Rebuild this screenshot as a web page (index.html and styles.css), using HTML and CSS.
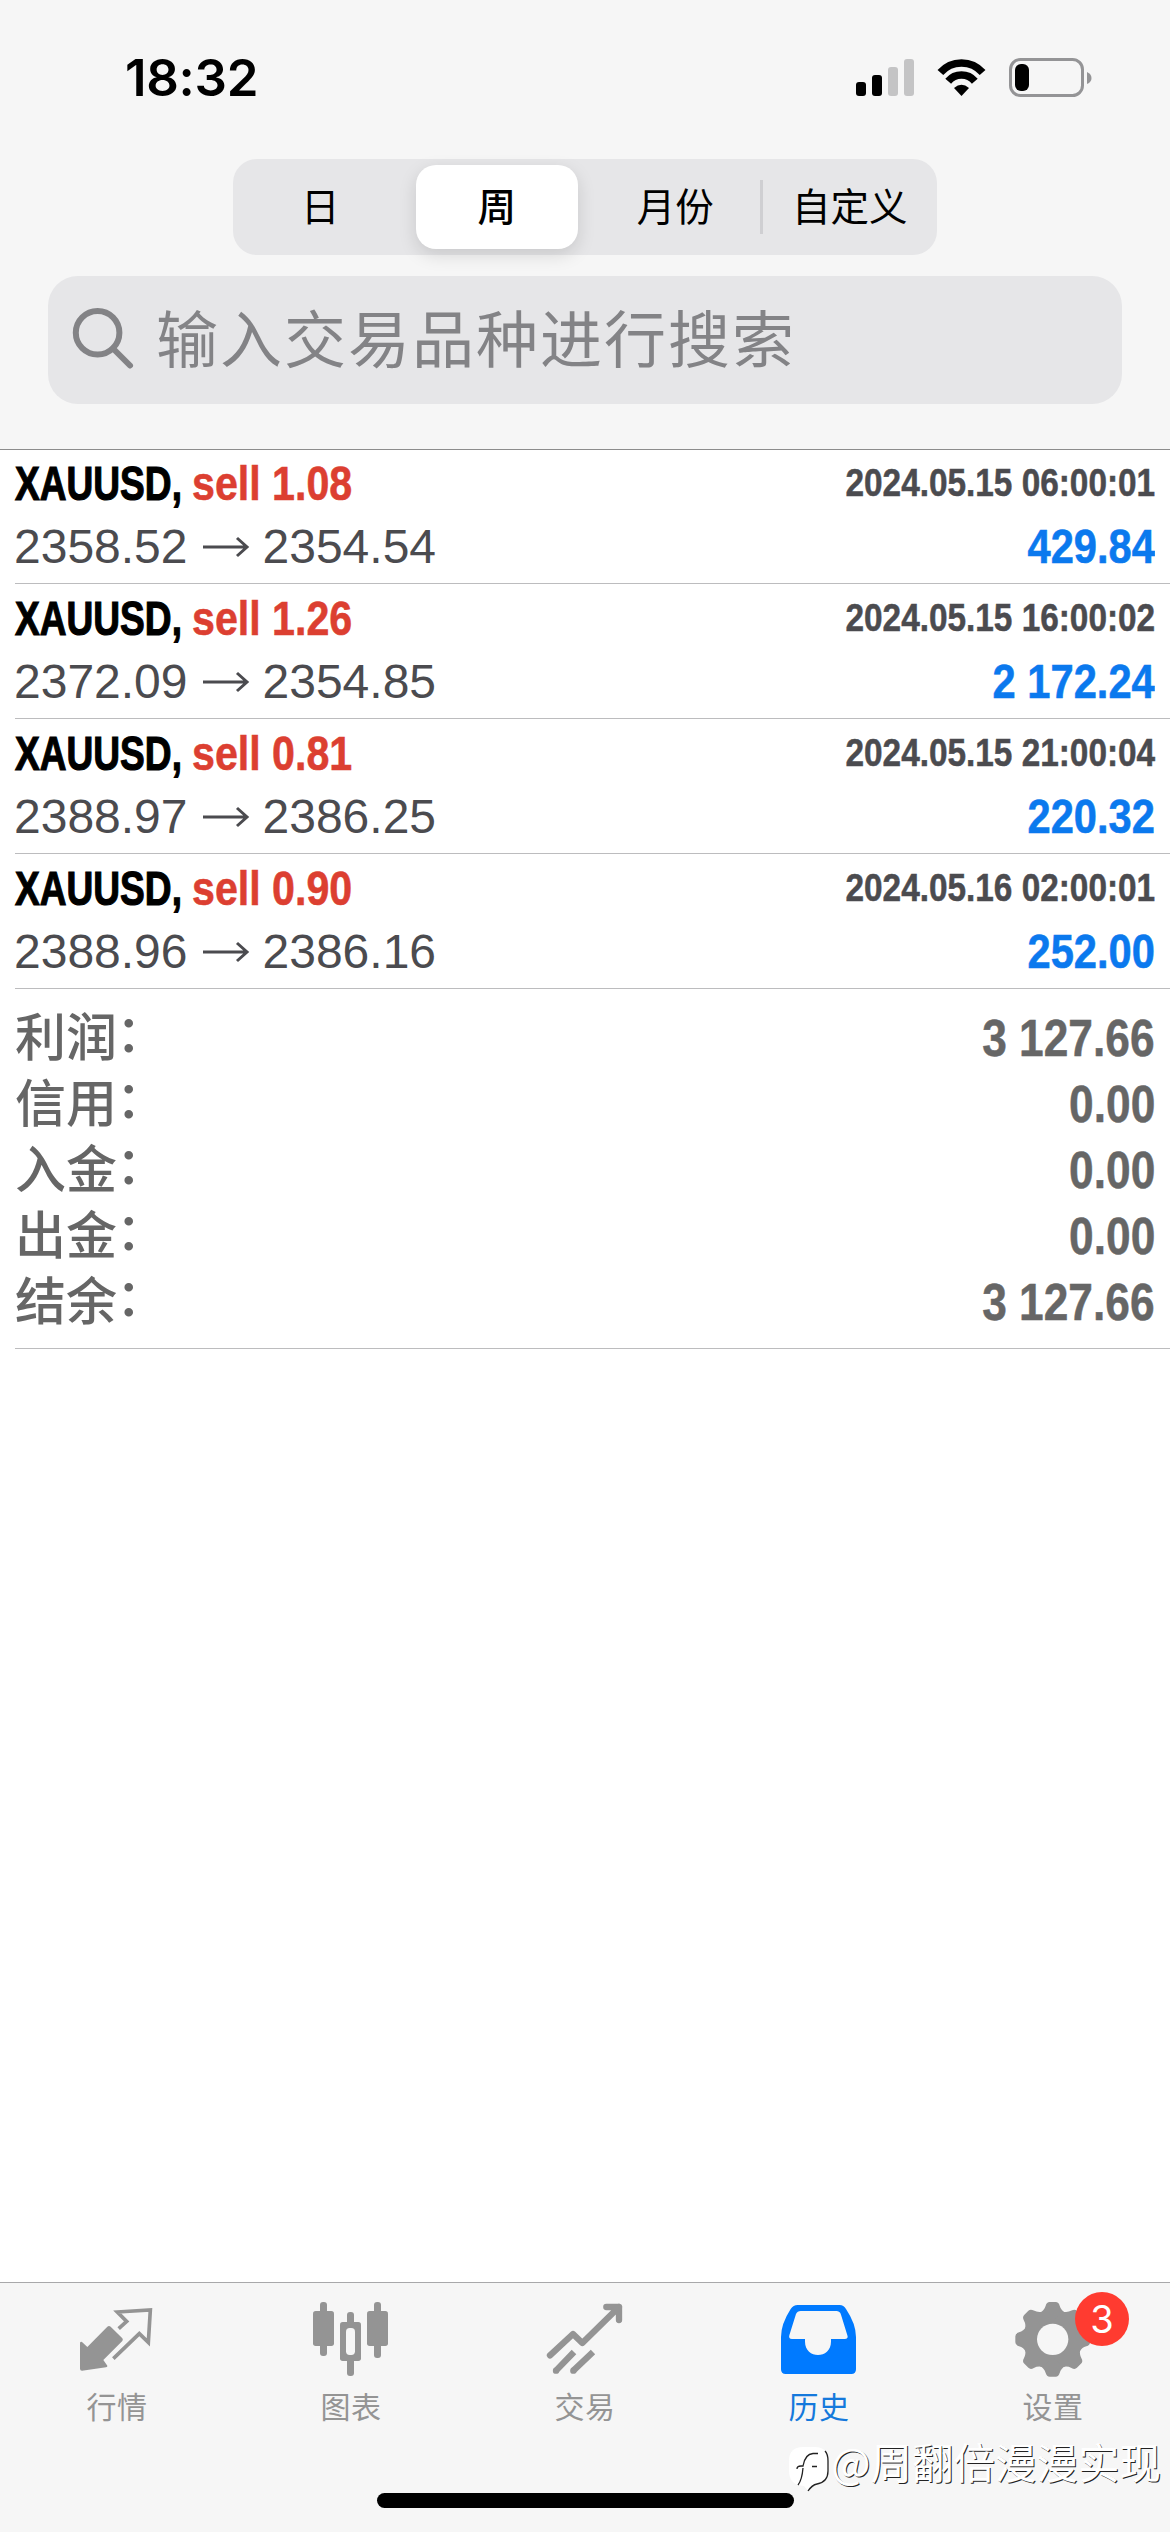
FILE: index.html
```html
<!DOCTYPE html>
<html lang="zh-CN">
<head>
<meta charset="utf-8">
<title>历史</title>
<link rel="stylesheet" href="styles.css">
</head>
<body>
<div class="screen">
  <header class="top">
    <div class="status">
      <span class="time">18:32</span>
      <svg class="status-icons" width="240" height="50" viewBox="0 0 240 50">
        <rect x="0" y="26" width="10" height="14" rx="3"/>
        <rect x="16" y="19" width="10" height="21" rx="3"/>
        <rect x="32" y="11" width="10" height="29" rx="3" fill="#c4c4c5"/>
        <rect x="48" y="3" width="10" height="37" rx="3" fill="#c4c4c5"/>
        <path d="M84.400 16.600A28 28 0 0 1 126.600 16.600M92.200 25.200A17.500 17.500 0 0 1 118.800 25.200" fill="none" stroke="#000" stroke-width="7.600"/>
        <path d="M98 32Q105.500 25.500 113 32L105.500 40Z"/>
        <rect x="154.500" y="3.500" width="72" height="36" rx="10" fill="none" stroke="#949496" stroke-width="3"/>
        <rect x="159" y="8" width="14" height="27" rx="6"/>
        <path d="M231 16Q235.500 18 235.500 22T231 28Z" fill="#949496"/>
      </svg>
    </div>
    <nav class="segments">
      <span class="segment">日</span>
      <span class="segment active">周</span>
      <span class="segment month">月份</span>
      <span class="segment divided">自定义</span>
    </nav>
    <div class="search">
      <svg class="search-icon" width="70" height="70" viewBox="0 0 70 70"><circle cx="29.600" cy="27.800" r="21.800"/><path d="M45 43.500L62 60.500"/></svg>
      <span class="placeholder">输入交易品种进行搜索</span>
    </div>
  </header>
  <main class="content">
    <section class="deals">
      <article class="deal">
        <div class="line"><span class="symbol">XAUUSD,</span><span class="side">sell 1.08</span><time class="date">2024.05.15 06:00:01</time></div>
        <div class="line prices"><span>2358.52</span><svg class="arrow" width="48" height="22" viewBox="0 0 48 22"><path d="M1 11H45M35 2L45 11L35 20"/></svg><span>2354.54</span><span class="profit">429.84</span></div>
      </article>
      <article class="deal">
        <div class="line"><span class="symbol">XAUUSD,</span><span class="side">sell 1.26</span><time class="date">2024.05.15 16:00:02</time></div>
        <div class="line prices"><span>2372.09</span><svg class="arrow" width="48" height="22" viewBox="0 0 48 22"><path d="M1 11H45M35 2L45 11L35 20"/></svg><span>2354.85</span><span class="profit">2 172.24</span></div>
      </article>
      <article class="deal">
        <div class="line"><span class="symbol">XAUUSD,</span><span class="side">sell 0.81</span><time class="date">2024.05.15 21:00:04</time></div>
        <div class="line prices"><span>2388.97</span><svg class="arrow" width="48" height="22" viewBox="0 0 48 22"><path d="M1 11H45M35 2L45 11L35 20"/></svg><span>2386.25</span><span class="profit">220.32</span></div>
      </article>
      <article class="deal">
        <div class="line"><span class="symbol">XAUUSD,</span><span class="side">sell 0.90</span><time class="date">2024.05.16 02:00:01</time></div>
        <div class="line prices"><span>2388.96</span><svg class="arrow" width="48" height="22" viewBox="0 0 48 22"><path d="M1 11H45M35 2L45 11L35 20"/></svg><span>2386.16</span><span class="profit">252.00</span></div>
      </article>
    </section>
    <section class="summary">
      <div class="total"><span class="label">利润<i>：</i></span><span class="value">3 127.66</span></div>
      <div class="total"><span class="label">信用<i>：</i></span><span class="value">0.00</span></div>
      <div class="total"><span class="label">入金<i>：</i></span><span class="value">0.00</span></div>
      <div class="total"><span class="label">出金<i>：</i></span><span class="value">0.00</span></div>
      <div class="total"><span class="label">结余<i>：</i></span><span class="value">3 127.66</span></div>
    </section>
  </main>
  <footer class="tabbar">
    <div class="tab">
      <svg width="80" height="80" viewBox="231 117 240 240">
        <path d="M240 248Q242 244 246 246L262 261L322 200Q327 196 332 200L367 235Q370 239 367 243L310 300L322 317Q323 321 318 322L246 332Q240 332 240 326Z" fill="#949494"/>
        <path d="M356 206L380 184L352 156L451 150L445 247L418 221L340 296" fill="none" stroke="#949494" stroke-width="11"/>
      </svg>
      <span>行情</span>
    </div>
    <div class="tab">
      <svg width="80" height="80" viewBox="933 117 240 240" fill="#949494">
        <rect x="960" y="126" width="21" height="162" rx="9"/><rect x="939" y="153" width="63" height="105" rx="8"/>
        <rect x="1122" y="126" width="21" height="168" rx="9"/><rect x="1101" y="153" width="63" height="105" rx="8"/>
        <rect x="1041" y="156" width="21" height="192" rx="9"/><rect x="1020" y="186" width="63" height="117" rx="8"/>
        <rect x="1038" y="204" width="27" height="81" rx="11" fill="#f6f6f6"/>
      </svg>
      <span>图表</span>
    </div>
    <div class="tab">
      <svg width="80" height="80" viewBox="375 117 240 240" fill="none" stroke="#949494" stroke-width="19">
        <path d="M390 286L459 222L487 249L597 141M559 141H597V180" stroke-linecap="round" stroke-linejoin="round"/>
        <path d="M408 332L462 276M460 332L519 276"/>
        <g fill="#949494" stroke="none"><circle cx="408" cy="332" r="9.500"/><circle cx="460" cy="332" r="9.500"/></g>
      </svg>
      <span>交易</span>
    </div>
    <div class="tab current">
      <svg width="80" height="80" viewBox="87 117 240 240">
        <path fill="#007aff" fill-rule="evenodd" d="M143 135H269Q281 135 288 147Q318 192 318 231V328Q318 342 304 342H107Q93 342 93 328V231Q93 192 122 147Q130 135 143 135ZM152 153Q142 153 138 162L118 226Q115 237 126 237H165V245C165 298 243 298 243 245V237H284Q296 237 292 226L273 164Q270 153 259 153Z"/>
      </svg>
      <span>历史</span>
    </div>
    <div class="tab">
      <svg width="80" height="80" viewBox="789 117 240 240">
        <g fill="#949494" transform="translate(908 238)">
          <circle r="88"/>
          <path id="tooth" d="M-38-80Q-25-87-21-101Q-18-112-9-112H9Q18-112 21-101Q25-87 38-80V80Q25 87 21 101Q18 112 9 112H-9Q-18 112-21 101Q-25 87-38 80Z"/><use href="#tooth" transform="rotate(45)"/><use href="#tooth" transform="rotate(90)"/><use href="#tooth" transform="rotate(135)"/>
          <circle r="47" fill="#f6f6f6"/>
        </g>
      </svg>
      <span>设置</span>
      <b class="badge">3</b>
    </div>
    <div class="home"></div>
    <div class="watermark">
      <svg width="44" height="50" viewBox="0 0 44 50"><path d="M16 3H28Q41 3 41 17V27Q41 38 30 40Q24 41 21 47L17 42Q2 41 2 27V17Q2 3 16 3Z" fill="#fff"/><path d="M10 25Q10 22 14 22H16Q18 10 26 9.500L31 9.500M25 22.500H30M16 24Q15 36 11 41M38 7Q41 10 41 17V27Q41 38 30 40Q25 41 21 47" fill="none" stroke="#222" stroke-width="1.300"/></svg>
      <span>@周翻倍漫漫实现</span>
    </div>
  </footer>
</div>
</body>
</html>
```
FILE: styles.css
```css
* { box-sizing: border-box; }
body { margin: 0; background: #fff; font-family: "Liberation Sans", "Noto Sans CJK SC", sans-serif; }
.screen { width: 1170px; height: 2532px; display: flex; flex-direction: column; overflow: hidden; }

.top { height: 450px; background: #f6f6f6; border-bottom: 1px solid #8c8c8c; display: flex; flex-direction: column; align-items: center; }
.status { width: 100%; height: 159px; padding: 56px 74px 0 125px; display: flex; justify-content: space-between; align-items: flex-start; }
.time { font: 600 51px/44px Inter, sans-serif; letter-spacing: -0.3px; }
.status-icons { display: block; }
.segments { width: 704px; height: 96px; padding: 6px; border-radius: 24px; background: #e6e6e8; display: grid; grid-template-columns: repeat(4, 1fr); gap: 14px; }
.segment { position: relative; display: flex; align-items: center; justify-content: center; padding-bottom: 6px; font: 400 38.5px/1 "Noto Sans CJK SC", sans-serif; white-space: nowrap; }
.segment.month { padding-left: 4px; }
.segment.active { background: #fff; border-radius: 20px; font-weight: 500; box-shadow: 0 6px 18px rgba(0, 0, 0, .13); }
.segment.divided::before { content: ""; position: absolute; left: -9px; top: 15px; width: 3px; height: 54px; background: #cfcfd2; }
.search { width: 1074px; height: 128px; margin-top: 21px; padding-left: 20px; border-radius: 30px; background: #e6e6e8; display: flex; align-items: center; }
.search-icon { flex: none; margin-top: -1px; fill: none; stroke: #838386; stroke-width: 6; stroke-linecap: round; }
.placeholder { margin-left: 18px; padding-bottom: 9px; color: #838386; font: 400 62px/1 "Noto Sans CJK SC", sans-serif; letter-spacing: 2px; }

.content { flex: 1; }
.deals { padding-left: 15px; }
.deal { height: 135px; padding: 2px 15px 0 0; border-bottom: 1px solid #bcbcbe; }
.deal:first-child { height: 134px; padding-top: 1px; }
.line { height: 64px; display: flex; align-items: center; white-space: pre; font-size: 49px; font-weight: 700; }
.symbol { width: 177px; transform: scaleX(.757); transform-origin: left; -webkit-text-stroke: 1.2px; }
.side { color: #dc3f31; transform: scaleX(.84); transform-origin: left; -webkit-text-stroke: .6px; }
.date { margin-left: auto; color: #4b4b4f; font-size: 39px; transform: scaleX(.855); transform-origin: right; -webkit-text-stroke: .5px; }
.prices { height: 63px; font-size: 48px; font-weight: 400; color: #4b4b4f; margin-left: -1px; }
.arrow { margin: 0 13px 0 14px; fill: none; stroke: #4b4b4f; stroke-width: 3; }
.profit { margin-left: auto; padding-bottom: 2px; color: #0b79ee; font-size: 49px; font-weight: 700; transform: scaleX(.85); transform-origin: right; -webkit-text-stroke: .6px; }
.summary { margin-left: 15px; padding: 15px 0 14px; border-bottom: 1px solid #bcbcbe; }
.total { height: 66px; padding-right: 15px; display: flex; justify-content: space-between; align-items: center; color: #666; }
.label { padding-top: 4px; font: 500 51px/54px "Liberation Sans", "Noto Sans CJK SC", sans-serif; }
.label i { position: relative; left: -1px; top: -4px; font-style: normal; }
.value { margin-top: 2px; font-size: 51px; font-weight: 700; transform: scaleX(.868); transform-origin: right; -webkit-text-stroke: .5px; }

.tabbar { position: relative; height: 250px; border-top: 1px solid #a8a8aa; padding-top: 16px; background: #f6f6f6; display: grid; grid-template-columns: repeat(5, 1fr); align-items: start; }
.tab { position: relative; display: flex; flex-direction: column; align-items: center; color: #949494; font: 400 30px/44px "Noto Sans CJK SC", sans-serif; letter-spacing: .6px; }
.tab svg { display: block; }
.tab span { margin-top: 4px; }
.tab.current { color: #1579dc; }
.badge { position: absolute; left: 139px; top: -7px; width: 54px; height: 54px; border-radius: 50%; background: #ff3b30; color: #fff; font: 400 38px/54px Inter, sans-serif; text-align: center; letter-spacing: 0; }
.home { position: absolute; left: 377px; top: 210px; width: 417px; height: 15px; border-radius: 8px; background: #000; }
.watermark { position: absolute; right: 9px; top: 157px; display: flex; align-items: flex-start; gap: 0; color: #fff; font: 400 41.5px/42px "Noto Sans CJK SC", sans-serif; text-shadow: 1px 1px 0 #222; white-space: nowrap; }
.watermark svg { margin-top: 4px; }
```
